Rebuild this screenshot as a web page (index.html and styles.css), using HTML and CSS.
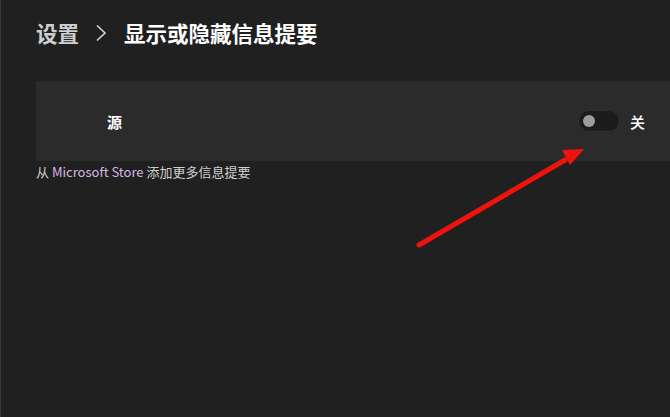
FILE: index.html
```html
<!DOCTYPE html>
<html lang="zh-CN">
<head>
  <meta charset="UTF-8">
  <title>显示或隐藏信息提要</title>
  <link rel="stylesheet" href="styles.css">
</head>
<body>
<div class="page">
  <h1 class="crumbs">
    <span class="crumb-parent">设置</span>
    <svg class="crumb-sep" width="12" height="18" viewBox="0 0 12 18">
      <polyline points="2,1.5 10,9 2,16.5" fill="none" stroke="#d4d4d4" stroke-width="1.6"/>
    </svg>
    <span class="crumb-current">显示或隐藏信息提要</span>
  </h1>

  <div class="card">
    <span class="card-label">源</span>
    <div class="switch-wrap">
      <span class="switch"><span class="knob"></span></span>
      <span class="switch-text">关</span>
    </div>
  </div>

  <p class="more">从 <a class="store-link">Microsoft Store</a> 添加更多信息提要</p>
</div>

<svg class="arrow" width="670" height="417" viewBox="0 0 670 417">
  <line x1="419" y1="245" x2="565" y2="160" stroke="#f0130d" stroke-width="5" stroke-linecap="round"/>
  <polygon points="584,149 562,150 570,165" fill="#f0130d"/>
</svg>
</body>
</html>
```

FILE: styles.css
```css
html, body { margin: 0; height: 100%; }
body {
  background: #202020;
  font-family: "Noto Sans CJK SC", "Noto Sans", sans-serif;
  color: #fff;
  border-left: 1px solid #3a3a3a;
  box-sizing: border-box;
  overflow: hidden;
}
.page { padding: 18px 0 0 35px; }
.crumbs {
  margin: 0;
  font-size: 21.5px;
  font-weight: 600;
  display: flex;
  align-items: center;
  line-height: 30px;
}
.crumb-parent { color: #cfcfcf; }
.crumb-sep { margin: 0 17px 0 16px; }
.crumb-current { color: #fff; }

.card {
  margin-top: 33px;
  height: 80px;
  background: #2b2b2b;
  display: flex;
  align-items: center;
  padding-left: 71px;
  padding-right: 25px;
}
.card-label { font-size: 15px; font-weight: 600; flex: 1; }
.switch-wrap { display: flex; align-items: center; gap: 10px; }
.switch {
  width: 42px;
  height: 22px;
  border-radius: 11px;
  background: #1c1c1c;
  border: 1px solid #303030;
  display: flex;
  align-items: center;
  padding-left: 4px;
  box-sizing: border-box;
}
.knob { width: 12px; height: 12px; border-radius: 50%; background: #9d9d9d; }
.switch-text { font-size: 15px; font-weight: 500; }

.more {
  margin: 1px 0 0;
  font-size: 13px;
  color: #cfcfcf;
}
.store-link { color: #d9b7e3; }

.arrow { position: absolute; left: 0; top: 0; pointer-events: none; }
```
